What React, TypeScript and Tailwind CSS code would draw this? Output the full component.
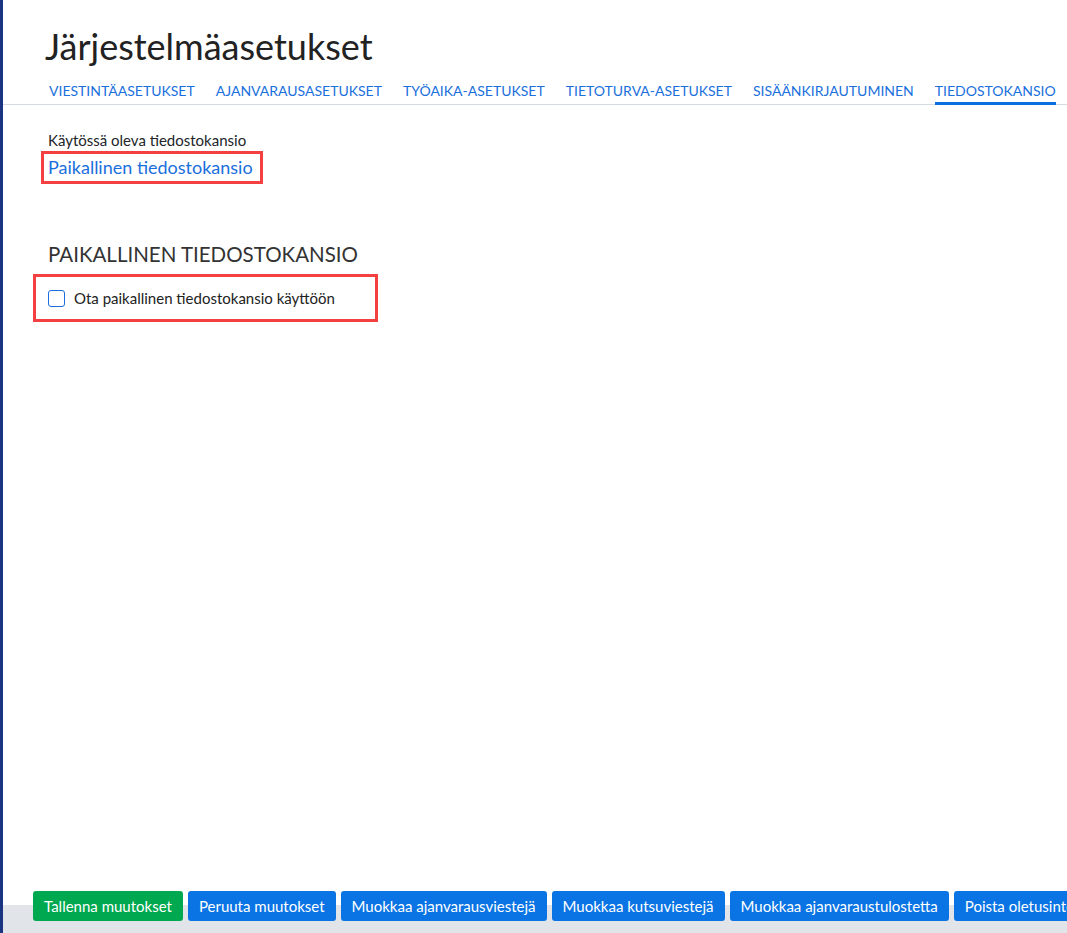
import React from "react";

const tabs = [
  "VIESTINTÄASETUKSET",
  "AJANVARAUSASETUKSET",
  "TYÖAIKA-ASETUKSET",
  "TIETOTURVA-ASETUKSET",
  "SISÄÄNKIRJAUTUMINEN",
  "TIEDOSTOKANSIO",
];

const actions = [
  { label: "Tallenna muutokset", green: true },
  { label: "Peruuta muutokset" },
  { label: "Muokkaa ajanvarausviestejä" },
  { label: "Muokkaa kutsuviestejä" },
  { label: "Muokkaa ajanvaraustulostetta" },
  { label: "Poista oletusinternetsivut käytöstä" },
];

export default function App() {
  const activeTab = "TIEDOSTOKANSIO";

  return (
    <div className="h-screen flex flex-col overflow-hidden border-l-[3px] border-[#1b3481] bg-white text-[#212529] font-['Lato','Noto_Sans',sans-serif]">
      <div className="flex-1">
        {/* Page title */}
        <h1 className="pl-[42px] pt-[22px] text-[36px] leading-[48px] text-[#222]">
          Järjestelmäasetukset
        </h1>

        {/* Settings tabs */}
        <nav className="mt-[12px] flex gap-[21px] pl-[46px] border-b border-[#d5dbe1] whitespace-nowrap">
          {tabs.map((tab) => (
            <a
              key={tab}
              href="#"
              className={`pb-[2px] text-[14px] leading-[18px] text-[#1a6fdc] border-b-[3px] -mb-px ${
                tab === activeTab ? "border-[#0b6fe0]" : "border-transparent"
              }`}
            >
              {tab}
            </a>
          ))}
        </nav>

        {/* Current folder */}
        <div className="pl-[45px] pt-[26px]">
          <div className="text-[15px] leading-[19px]">Käytössä oleva tiedostokansio</div>
          <div className="inline-block -ml-[7px] mt-[1px] border-[3px] border-[#f44040] pl-[4px] pr-[7px] py-[1px]">
            <a href="#" className="text-[18px] leading-[24px] text-[#1a6fdc]">
              Paikallinen tiedostokansio
            </a>
          </div>
        </div>

        {/* Local folder section */}
        <div className="pl-[30px] pt-[57px]">
          <h2 className="pl-[15px] text-[20.5px] leading-[26px] text-[#333]">
            PAIKALLINEN TIEDOSTOKANSIO
          </h2>
          <label className="mt-[7px] inline-flex items-center gap-[9px] border-[3px] border-[#f44040] pl-[12px] pr-[40px] h-[48px]">
            <span className="w-[17px] h-[17px] rounded-[3px] border border-[#1a6fdc] bg-white" />
            <span className="text-[15px] leading-[20px] text-[#222]">
              Ota paikallinen tiedostokansio käyttöön
            </span>
          </label>
        </div>
      </div>

      {/* Bottom action bar */}
      <div className="h-[42px] flex gap-[5px] pl-[30px] whitespace-nowrap bg-[linear-gradient(to_bottom,#ffffff_14px,#e1e5e9_14px)]">
        {actions.map((a) => (
          <button
            key={a.label}
            className={`h-[30px] px-[11px] rounded-[3px] text-[15px] text-white shrink-0 ${
              a.green ? "bg-[#00a84f]" : "bg-[#0a74e4]"
            }`}
          >
            {a.label}
          </button>
        ))}
      </div>
    </div>
  );
}
